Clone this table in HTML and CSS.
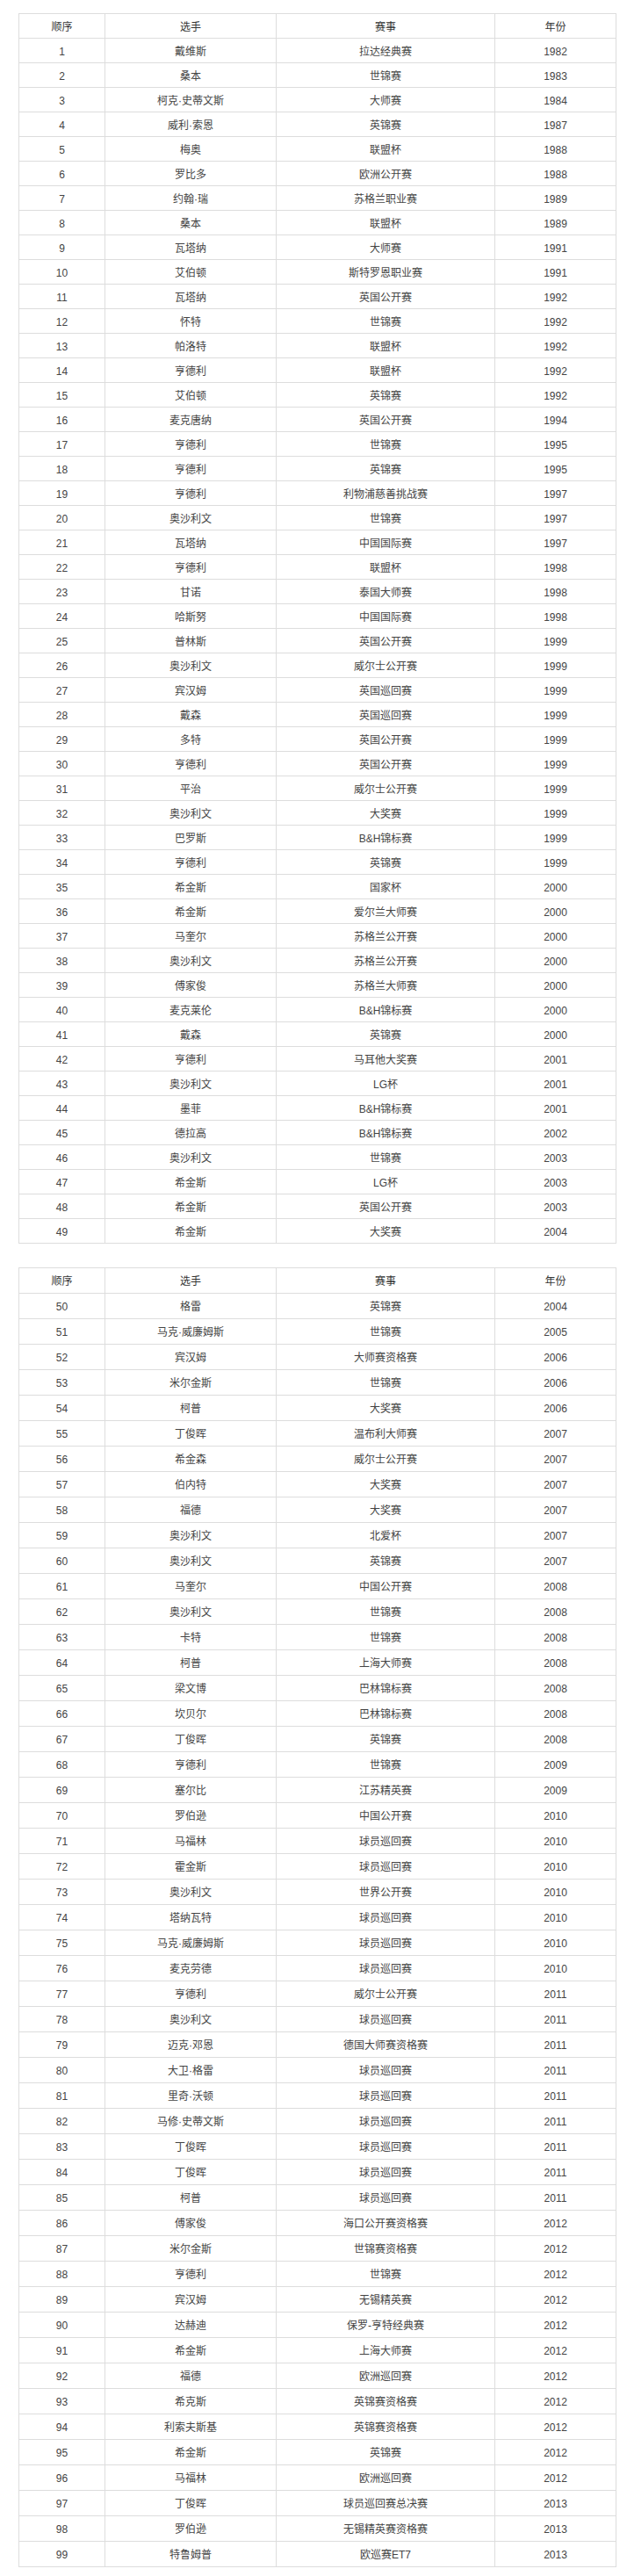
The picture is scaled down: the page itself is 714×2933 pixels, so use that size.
FILE: index.html
```html
<!DOCTYPE html>
<html lang="zh-CN">
<head>
<meta charset="utf-8">
<title>单杆147记录</title>
<link rel="stylesheet" href="styles.css">
</head>
<body>
<div class="page">
<table class="records first">
<colgroup><col class="c1"><col class="c2"><col class="c3"><col class="c4"></colgroup>
<thead><tr><th>顺序</th><th>选手</th><th>赛事</th><th>年份</th></tr></thead>
<tbody>
<tr><td>1</td><td>戴维斯</td><td>拉达经典赛</td><td>1982</td></tr>
<tr><td>2</td><td>桑本</td><td>世锦赛</td><td>1983</td></tr>
<tr><td>3</td><td>柯克·史蒂文斯</td><td>大师赛</td><td>1984</td></tr>
<tr><td>4</td><td>威利·索恩</td><td>英锦赛</td><td>1987</td></tr>
<tr><td>5</td><td>梅奥</td><td>联盟杯</td><td>1988</td></tr>
<tr><td>6</td><td>罗比多</td><td>欧洲公开赛</td><td>1988</td></tr>
<tr><td>7</td><td>约翰·瑞</td><td>苏格兰职业赛</td><td>1989</td></tr>
<tr><td>8</td><td>桑本</td><td>联盟杯</td><td>1989</td></tr>
<tr><td>9</td><td>瓦塔纳</td><td>大师赛</td><td>1991</td></tr>
<tr><td>10</td><td>艾伯顿</td><td>斯特罗恩职业赛</td><td>1991</td></tr>
<tr><td>11</td><td>瓦塔纳</td><td>英国公开赛</td><td>1992</td></tr>
<tr><td>12</td><td>怀特</td><td>世锦赛</td><td>1992</td></tr>
<tr><td>13</td><td>帕洛特</td><td>联盟杯</td><td>1992</td></tr>
<tr><td>14</td><td>亨德利</td><td>联盟杯</td><td>1992</td></tr>
<tr><td>15</td><td>艾伯顿</td><td>英锦赛</td><td>1992</td></tr>
<tr><td>16</td><td>麦克唐纳</td><td>英国公开赛</td><td>1994</td></tr>
<tr><td>17</td><td>亨德利</td><td>世锦赛</td><td>1995</td></tr>
<tr><td>18</td><td>亨德利</td><td>英锦赛</td><td>1995</td></tr>
<tr><td>19</td><td>亨德利</td><td>利物浦慈善挑战赛</td><td>1997</td></tr>
<tr><td>20</td><td>奥沙利文</td><td>世锦赛</td><td>1997</td></tr>
<tr><td>21</td><td>瓦塔纳</td><td>中国国际赛</td><td>1997</td></tr>
<tr><td>22</td><td>亨德利</td><td>联盟杯</td><td>1998</td></tr>
<tr><td>23</td><td>甘诺</td><td>泰国大师赛</td><td>1998</td></tr>
<tr><td>24</td><td>哈斯努</td><td>中国国际赛</td><td>1998</td></tr>
<tr><td>25</td><td>普林斯</td><td>英国公开赛</td><td>1999</td></tr>
<tr><td>26</td><td>奥沙利文</td><td>威尔士公开赛</td><td>1999</td></tr>
<tr><td>27</td><td>宾汉姆</td><td>英国巡回赛</td><td>1999</td></tr>
<tr><td>28</td><td>戴森</td><td>英国巡回赛</td><td>1999</td></tr>
<tr><td>29</td><td>多特</td><td>英国公开赛</td><td>1999</td></tr>
<tr><td>30</td><td>亨德利</td><td>英国公开赛</td><td>1999</td></tr>
<tr><td>31</td><td>平治</td><td>威尔士公开赛</td><td>1999</td></tr>
<tr><td>32</td><td>奥沙利文</td><td>大奖赛</td><td>1999</td></tr>
<tr><td>33</td><td>巴罗斯</td><td>B&amp;H锦标赛</td><td>1999</td></tr>
<tr><td>34</td><td>亨德利</td><td>英锦赛</td><td>1999</td></tr>
<tr><td>35</td><td>希金斯</td><td>国家杯</td><td>2000</td></tr>
<tr><td>36</td><td>希金斯</td><td>爱尔兰大师赛</td><td>2000</td></tr>
<tr><td>37</td><td>马奎尔</td><td>苏格兰公开赛</td><td>2000</td></tr>
<tr><td>38</td><td>奥沙利文</td><td>苏格兰公开赛</td><td>2000</td></tr>
<tr><td>39</td><td>傅家俊</td><td>苏格兰大师赛</td><td>2000</td></tr>
<tr><td>40</td><td>麦克莱伦</td><td>B&amp;H锦标赛</td><td>2000</td></tr>
<tr><td>41</td><td>戴森</td><td>英锦赛</td><td>2000</td></tr>
<tr><td>42</td><td>亨德利</td><td>马耳他大奖赛</td><td>2001</td></tr>
<tr><td>43</td><td>奥沙利文</td><td>LG杯</td><td>2001</td></tr>
<tr><td>44</td><td>墨菲</td><td>B&amp;H锦标赛</td><td>2001</td></tr>
<tr><td>45</td><td>德拉高</td><td>B&amp;H锦标赛</td><td>2002</td></tr>
<tr><td>46</td><td>奥沙利文</td><td>世锦赛</td><td>2003</td></tr>
<tr><td>47</td><td>希金斯</td><td>LG杯</td><td>2003</td></tr>
<tr><td>48</td><td>希金斯</td><td>英国公开赛</td><td>2003</td></tr>
<tr><td>49</td><td>希金斯</td><td>大奖赛</td><td>2004</td></tr>
</tbody>
</table>

<table class="records second">
<colgroup><col class="c1"><col class="c2"><col class="c3"><col class="c4"></colgroup>
<thead><tr><th>顺序</th><th>选手</th><th>赛事</th><th>年份</th></tr></thead>
<tbody>
<tr><td>50</td><td>格雷</td><td>英锦赛</td><td>2004</td></tr>
<tr><td>51</td><td>马克·威廉姆斯</td><td>世锦赛</td><td>2005</td></tr>
<tr><td>52</td><td>宾汉姆</td><td>大师赛资格赛</td><td>2006</td></tr>
<tr><td>53</td><td>米尔金斯</td><td>世锦赛</td><td>2006</td></tr>
<tr><td>54</td><td>柯普</td><td>大奖赛</td><td>2006</td></tr>
<tr><td>55</td><td>丁俊晖</td><td>温布利大师赛</td><td>2007</td></tr>
<tr><td>56</td><td>希金森</td><td>威尔士公开赛</td><td>2007</td></tr>
<tr><td>57</td><td>伯内特</td><td>大奖赛</td><td>2007</td></tr>
<tr><td>58</td><td>福德</td><td>大奖赛</td><td>2007</td></tr>
<tr><td>59</td><td>奥沙利文</td><td>北爱杯</td><td>2007</td></tr>
<tr><td>60</td><td>奥沙利文</td><td>英锦赛</td><td>2007</td></tr>
<tr><td>61</td><td>马奎尔</td><td>中国公开赛</td><td>2008</td></tr>
<tr><td>62</td><td>奥沙利文</td><td>世锦赛</td><td>2008</td></tr>
<tr><td>63</td><td>卡特</td><td>世锦赛</td><td>2008</td></tr>
<tr><td>64</td><td>柯普</td><td>上海大师赛</td><td>2008</td></tr>
<tr><td>65</td><td>梁文博</td><td>巴林锦标赛</td><td>2008</td></tr>
<tr><td>66</td><td>坎贝尔</td><td>巴林锦标赛</td><td>2008</td></tr>
<tr><td>67</td><td>丁俊晖</td><td>英锦赛</td><td>2008</td></tr>
<tr><td>68</td><td>亨德利</td><td>世锦赛</td><td>2009</td></tr>
<tr><td>69</td><td>塞尔比</td><td>江苏精英赛</td><td>2009</td></tr>
<tr><td>70</td><td>罗伯逊</td><td>中国公开赛</td><td>2010</td></tr>
<tr><td>71</td><td>马福林</td><td>球员巡回赛</td><td>2010</td></tr>
<tr><td>72</td><td>霍金斯</td><td>球员巡回赛</td><td>2010</td></tr>
<tr><td>73</td><td>奥沙利文</td><td>世界公开赛</td><td>2010</td></tr>
<tr><td>74</td><td>塔纳瓦特</td><td>球员巡回赛</td><td>2010</td></tr>
<tr><td>75</td><td>马克·威廉姆斯</td><td>球员巡回赛</td><td>2010</td></tr>
<tr><td>76</td><td>麦克劳德</td><td>球员巡回赛</td><td>2010</td></tr>
<tr><td>77</td><td>亨德利</td><td>威尔士公开赛</td><td>2011</td></tr>
<tr><td>78</td><td>奥沙利文</td><td>球员巡回赛</td><td>2011</td></tr>
<tr><td>79</td><td>迈克·邓恩</td><td>德国大师赛资格赛</td><td>2011</td></tr>
<tr><td>80</td><td>大卫·格雷</td><td>球员巡回赛</td><td>2011</td></tr>
<tr><td>81</td><td>里奇·沃顿</td><td>球员巡回赛</td><td>2011</td></tr>
<tr><td>82</td><td>马修·史蒂文斯</td><td>球员巡回赛</td><td>2011</td></tr>
<tr><td>83</td><td>丁俊晖</td><td>球员巡回赛</td><td>2011</td></tr>
<tr><td>84</td><td>丁俊晖</td><td>球员巡回赛</td><td>2011</td></tr>
<tr><td>85</td><td>柯普</td><td>球员巡回赛</td><td>2011</td></tr>
<tr><td>86</td><td>傅家俊</td><td>海口公开赛资格赛</td><td>2012</td></tr>
<tr><td>87</td><td>米尔金斯</td><td>世锦赛资格赛</td><td>2012</td></tr>
<tr><td>88</td><td>亨德利</td><td>世锦赛</td><td>2012</td></tr>
<tr><td>89</td><td>宾汉姆</td><td>无锡精英赛</td><td>2012</td></tr>
<tr><td>90</td><td>达赫迪</td><td>保罗-亨特经典赛</td><td>2012</td></tr>
<tr><td>91</td><td>希金斯</td><td>上海大师赛</td><td>2012</td></tr>
<tr><td>92</td><td>福德</td><td>欧洲巡回赛</td><td>2012</td></tr>
<tr><td>93</td><td>希克斯</td><td>英锦赛资格赛</td><td>2012</td></tr>
<tr><td>94</td><td>利索夫斯基</td><td>英锦赛资格赛</td><td>2012</td></tr>
<tr><td>95</td><td>希金斯</td><td>英锦赛</td><td>2012</td></tr>
<tr><td>96</td><td>马福林</td><td>欧洲巡回赛</td><td>2012</td></tr>
<tr><td>97</td><td>丁俊晖</td><td>球员巡回赛总决赛</td><td>2013</td></tr>
<tr><td>98</td><td>罗伯逊</td><td>无锡精英赛资格赛</td><td>2013</td></tr>
<tr><td>99</td><td>特鲁姆普</td><td>欧巡赛ET7</td><td>2013</td></tr>
</tbody>
</table>
</div>
</body>
</html>
```

FILE: styles.css
```css
html, body {
  margin: 0;
  padding: 0;
  background: #ffffff;
}

.page {
  padding: 15px 13px 10px 21px;
  font-family: "Liberation Sans", "Noto Sans CJK SC", sans-serif;
  font-size: 12px;
  color: #444444;
}

.records {
  width: 680px;
  border-collapse: collapse;
  table-layout: fixed;
}

.records + .records {
  margin-top: 27px;
}

.c1 { width: 98px; }
.c2 { width: 195px; }
.c3 { width: 249px; }
.c4 { width: 138px; }

.records th,
.records td {
  border: 1px solid #dddddd;
  text-align: center;
  line-height: 16px;
  padding: 7px 4px 4px;
  font-weight: normal;
  white-space: nowrap;
}

.records th {
  color: #333333;
}

.second th,
.second td {
  padding-bottom: 5px;
}
```
